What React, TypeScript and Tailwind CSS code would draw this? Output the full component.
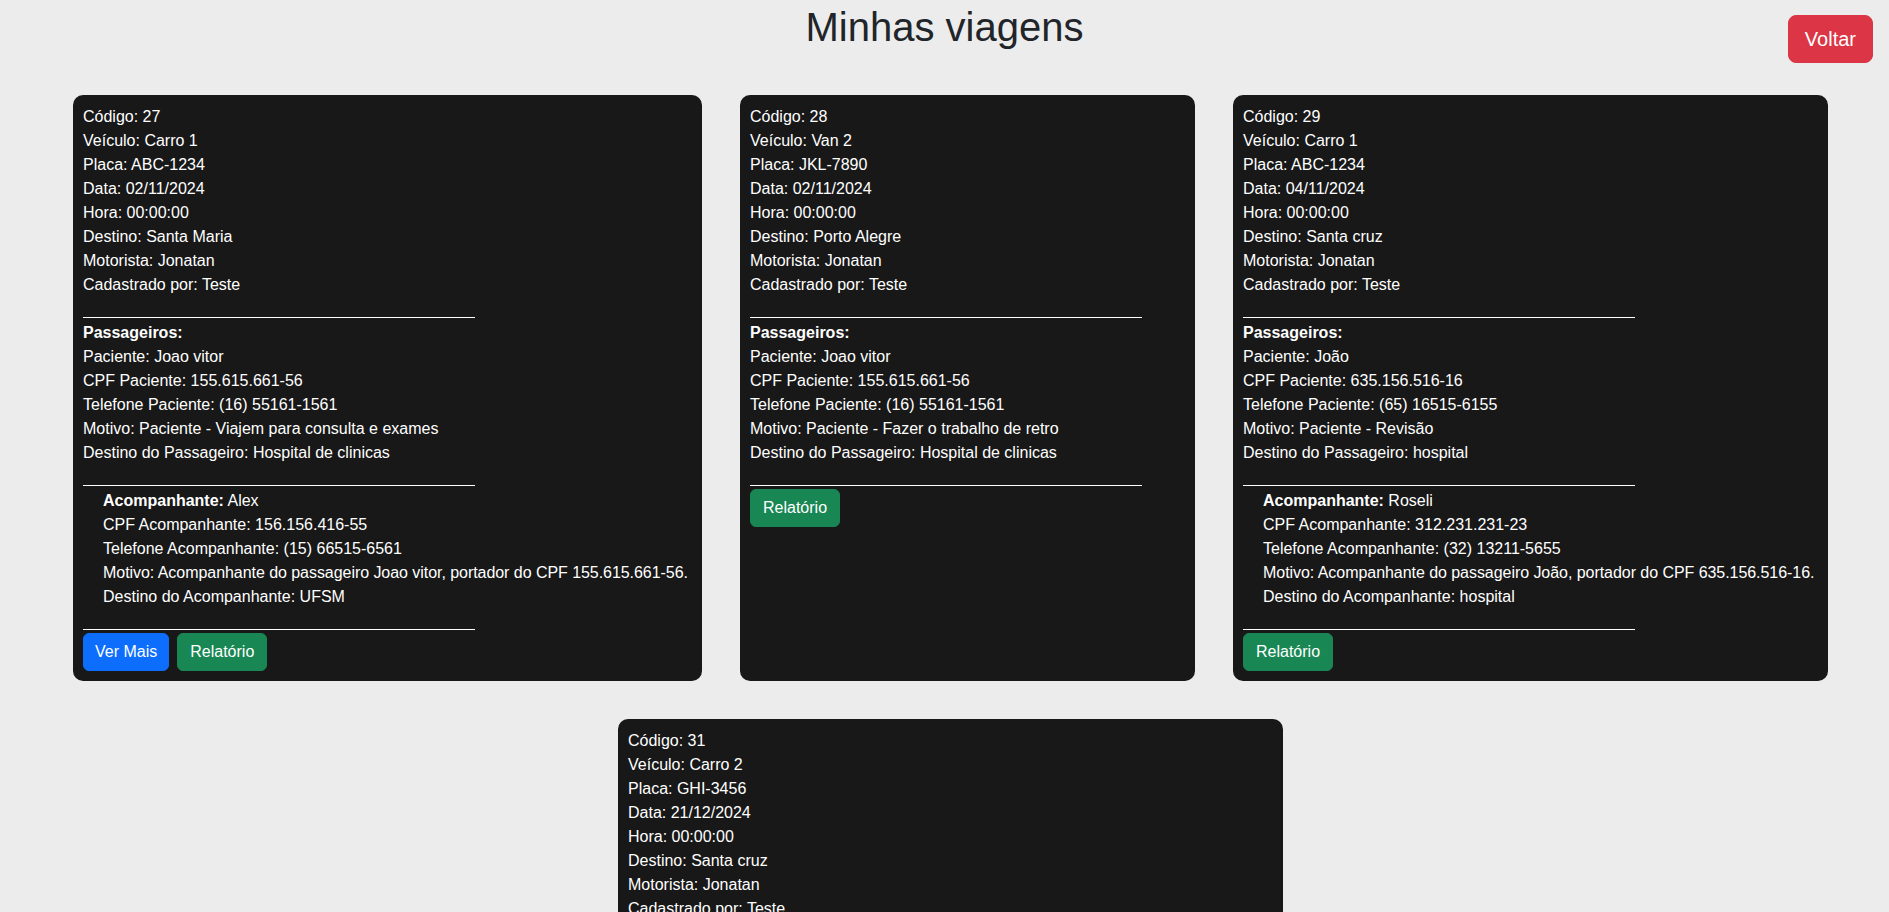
import React from "react";

type Acomp = { nome: string; cpf: string; tel: string; motivo: string; destino: string };
type Trip = {
  codigo: string;
  veiculo: string;
  placa: string;
  data: string;
  destino: string;
  paciente: string;
  cpf: string;
  tel: string;
  motivo: string;
  destinoPass: string;
  acomp?: Acomp;
  verMais?: boolean;
  width: string;
};

const trips: Trip[] = [
  {
    codigo: "27",
    veiculo: "Carro 1",
    placa: "ABC-1234",
    data: "02/11/2024",
    destino: "Santa Maria",
    paciente: "Joao vitor",
    cpf: "155.615.661-56",
    tel: "(16) 55161-1561",
    motivo: "Paciente - Viajem para consulta e exames",
    destinoPass: "Hospital de clinicas",
    acomp: {
      nome: "Alex",
      cpf: "156.156.416-55",
      tel: "(15) 66515-6561",
      motivo: "Acompanhante do passageiro Joao vitor, portador do CPF 155.615.661-56.",
      destino: "UFSM",
    },
    verMais: true,
    width: "w-[629px]",
  },
  {
    codigo: "28",
    veiculo: "Van 2",
    placa: "JKL-7890",
    data: "02/11/2024",
    destino: "Porto Alegre",
    paciente: "Joao vitor",
    cpf: "155.615.661-56",
    tel: "(16) 55161-1561",
    motivo: "Paciente - Fazer o trabalho de retro",
    destinoPass: "Hospital de clinicas",
    width: "w-[455px]",
  },
  {
    codigo: "29",
    veiculo: "Carro 1",
    placa: "ABC-1234",
    data: "04/11/2024",
    destino: "Santa cruz",
    paciente: "João",
    cpf: "635.156.516-16",
    tel: "(65) 16515-6155",
    motivo: "Paciente - Revisão",
    destinoPass: "hospital",
    acomp: {
      nome: "Roseli",
      cpf: "312.231.231-23",
      tel: "(32) 13211-5655",
      motivo: "Acompanhante do passageiro João, portador do CPF 635.156.516-16.",
      destino: "hospital",
    },
    width: "w-[595px]",
  },
  {
    codigo: "31",
    veiculo: "Carro 2",
    placa: "GHI-3456",
    data: "21/12/2024",
    destino: "Santa cruz",
    paciente: "Maria Eduarda",
    cpf: "415.616.151-61",
    tel: "(55) 98156-1561",
    motivo: "Paciente - Consulta de rotina",
    destinoPass: "Hospital de caridade",
    acomp: {
      nome: "Carlos",
      cpf: "651.561.561-51",
      tel: "(55) 99815-1651",
      motivo: "Acompanhante do passageiro Maria Eduarda, portador do CPF 415.616.151-61.",
      destino: "Hospital de caridade",
    },
    width: "w-[665px]",
  },
];

function Rule() {
  return <hr className="mt-[19.5px] mb-[3.5px] w-[392px] border-0 border-t border-white" />;
}

function Card({ t }: { t: Trip }) {
  return (
    <div
      className={`flex flex-col whitespace-nowrap rounded-[10px] bg-[#181818] p-[10px] text-[16px] leading-[24px] text-white ${t.width}`}
    >
      <div>
        <div>Código: {t.codigo}</div>
        <div>Veículo: {t.veiculo}</div>
        <div>Placa: {t.placa}</div>
        <div>Data: {t.data}</div>
        <div>Hora: 00:00:00</div>
        <div>Destino: {t.destino}</div>
        <div>Motorista: Jonatan</div>
        <div>Cadastrado por: Teste</div>
      </div>
      <Rule />
      <div>
        <div className="font-bold">Passageiros:</div>
        <div>Paciente: {t.paciente}</div>
        <div>CPF Paciente: {t.cpf}</div>
        <div>Telefone Paciente: {t.tel}</div>
        <div>Motivo: {t.motivo}</div>
        <div>Destino do Passageiro: {t.destinoPass}</div>
      </div>
      <Rule />
      {t.acomp && (
        <>
          <div className="pl-[20px]">
            <div>
              <span className="font-bold">Acompanhante:</span> {t.acomp.nome}
            </div>
            <div>CPF Acompanhante: {t.acomp.cpf}</div>
            <div>Telefone Acompanhante: {t.acomp.tel}</div>
            <div className="tracking-[-0.05px]">Motivo: {t.acomp.motivo}</div>
            <div>Destino do Acompanhante: {t.acomp.destino}</div>
          </div>
          <Rule />
        </>
      )}
      <div className="flex gap-[8px]">
        {t.verMais && (
          <button className="h-[38px] rounded-[6px] border border-[#0d6efd] bg-[#0d6efd] px-[11px] text-[16px] leading-[24px] text-white">
            Ver Mais
          </button>
        )}
        <button className="h-[38px] rounded-[6px] border border-[#198754] bg-[#198754] px-[12px] text-[16px] leading-[24px] text-white">
          Relatório
        </button>
      </div>
    </div>
  );
}

export default function App() {
  return (
    <div className="min-h-screen bg-[#ececec] pb-[40px] font-['Liberation_Sans',Arial,sans-serif]">
      <div className="grid grid-cols-[1fr_auto_1fr] items-start">
        <div />
        <h1 className="mt-[3px] text-[40px] leading-[48px] font-normal text-[#212529]">Minhas viagens</h1>
        <div className="flex justify-end pr-[16px] pt-[15px]">
          <button className="h-[48px] rounded-[8px] border border-[#dc3545] bg-[#dc3545] px-[16px] text-[20px] leading-[30px] text-white">
            Voltar
          </button>
        </div>
      </div>
      <div className="mt-[32px] flex flex-wrap items-stretch justify-center gap-[38px] pl-[12px]">
        {trips.map((t) => (
          <Card key={t.codigo} t={t} />
        ))}
      </div>
    </div>
  );
}
